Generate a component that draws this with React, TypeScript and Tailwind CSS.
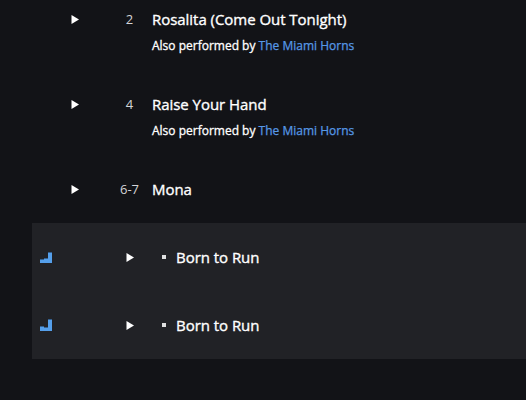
function Play() {
  return (
    <svg width="8" height="10" viewBox="0 0 8 10" className="block">
      <path d="M0.5 1 L8 5.5 L0.5 10 Z" fill="#fff" />
    </svg>
  );
}

function Row({ num, title, performer }: { num: string; title: string; performer?: string }) {
  return (
    <div className="flex h-[85px]">
      <div className="w-[116px] pt-[14px] pl-[71px]"><Play /></div>
      <div className="w-[27px] pt-[9px] text-center text-[13px] leading-5 text-[#d4d5d8]">{num}</div>
      <div className="pt-[9px] pl-[9px]">
        <div className="text-[15px] leading-5 tracking-[-0.04px] [-webkit-text-stroke:0.35px_currentColor]">{title}</div>
        {performer && (
          <div className="mt-[8px] text-[12px] leading-[18px] [-webkit-text-stroke:0.3px_currentColor]">
            Also performed by <span className="text-[#5698e6] [-webkit-text-stroke:0.25px_currentColor]">{performer}</span>
          </div>
        )}
      </div>
    </div>
  );
}

function Segue({ bars }: { bars: number[] }) {
  return (
    <div className="flex h-[68px] items-center">
      <svg width="12" height="12" viewBox="0 0 12 12" className="ml-2 block overflow-visible">
        {bars.map((h, i) => (
          <g key={i}>
            <rect x={i * 4} y={12 - h - 1} width="4" height="1" fill="#35618f" />
            <rect x={i * 4} y={12 - h} width="4" height={h} fill="#559fea" />
          </g>
        ))}
      </svg>
      <div className="ml-[74px]"><Play /></div>
      <div className="ml-[28px] h-1 w-1 bg-[#e0e0e0]" />
      <div className="ml-[10px] text-[15px] leading-5 tracking-[-0.04px] [-webkit-text-stroke:0.35px_currentColor]">Born to Run</div>
    </div>
  );
}

export default function App() {
  return (
    <div className="h-[400px] w-[526px] overflow-hidden bg-[#121317] font-['Open_Sans',sans-serif] font-normal whitespace-nowrap text-white">
      <Row num="2" title="Rosalita (Come Out Tonight)" performer="The Miami Horns" />
      <Row num="4" title="Raise Your Hand" performer="The Miami Horns" />
      <div className="h-[53px]"><Row num="6-7" title="Mona" /></div>
      <div className="ml-8 bg-[#212226]">
        <Segue bars={[3, 4, 10]} />
        <Segue bars={[4, 3, 11]} />
      </div>
    </div>
  );
}
